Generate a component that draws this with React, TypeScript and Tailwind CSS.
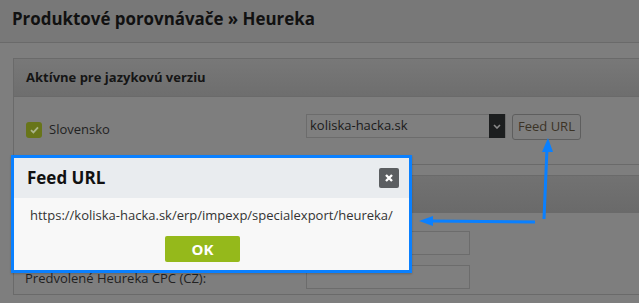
import React from 'react';

const font = { fontFamily: '"Open Sans", "Noto Sans", sans-serif' };

function Field({ label, top }: { label: string; top?: boolean }) {
  return (
    <div className={`flex items-center h-[34px] ${top ? 'mt-[13px]' : ''}`}>
      <div className="w-[292px] pl-[11px] pt-[3px] text-[13px] text-[#222]">{label}</div>
      <div className="h-[24px] w-[164px] border border-[#6c6c6c] bg-[#7f7f7f]" />
    </div>
  );
}

export default function App() {
  return (
    <div className="relative h-[303px] w-[639px] overflow-hidden bg-[#7e7e7e]" style={font}>
      <div className="h-[43px] border-b border-[#6a6a6a] bg-[#787878] pl-[12px] pt-[6px]">
        <h1 className="text-[16.9px] font-bold leading-[26px] text-[#111]">Produktové porovnávače » Heureka</h1>
      </div>

      <div className="pl-[13px] pt-[15px]">
        <div className="border border-r-0 border-[#6a6a6a]">
          <div className="flex h-[38px] items-center border-b border-[#6a6a6a] bg-gradient-to-b from-[#787878] to-[#6e6e6e] pl-[12px]">
            <span className="text-[13px] font-bold text-[#151515]">Aktívne pre jazykovú verziu</span>
          </div>
          <div className="flex h-[67px] items-start pt-[17px]">
            <div className="flex w-[292px] items-center pl-[12px] pt-[6px]">
              <span className="flex h-[16px] w-[16px] items-center justify-center rounded-[3px] bg-[#687519]">
                <svg width="9" height="8" viewBox="0 0 9 8">
                  <path d="M1 4.2 L3.4 6.4 L8 1.4" fill="none" stroke="#aab38a" strokeWidth="1.8" />
                </svg>
              </span>
              <span className="ml-[7px] text-[13px] text-[#222]">Slovensko</span>
            </div>
            <div className="flex h-[24px] w-[200px] items-center border border-[#6c6c6c] bg-[#7f7f7f]">
              <span className="flex-1 pl-[3px] text-[13px] text-[#1a1a1a]">koliska-hacka.sk</span>
              <span className="flex h-[24px] w-[16px] items-center justify-center bg-[#1c1e1f]">
                <svg width="8" height="5" viewBox="0 0 8 5">
                  <path d="M1 1 L4 4 L7 1" fill="none" stroke="#8a8a8a" strokeWidth="1.6" />
                </svg>
              </span>
            </div>
            <div className="ml-[6px] flex h-[26px] items-center rounded-[3px] border border-[#5e5e5e] px-[5px] text-[13px] text-[#3b3326]">
              Feed URL
            </div>
          </div>
        </div>

        <div className="mt-[10px] border border-r-0 border-[#6a6a6a]">
          <div className="h-[37px] border-b border-[#6a6a6a] bg-gradient-to-b from-[#727272] to-[#6a6a6a]" />
          <Field label="" top />
          <Field label="Predvolené Heureka CPC (CZ):" />
        </div>
      </div>

      <div className="absolute left-[11px] top-[155px] w-[401px] border-[3px] border-[#0a80ff] bg-[#f8f8f8] shadow-[0_1px_2px_rgba(0,0,0,0.2)]">
        <div className="flex h-[40px] items-center justify-between bg-[#e9ecef] pl-[13px] pr-[10px]">
          <span className="text-[17px] font-bold text-[#111]">Feed URL</span>
          <span className="flex h-[20px] w-[20px] items-center justify-center rounded-[2px] bg-[#5b5e61]">
            <svg width="10" height="10" viewBox="0 0 10 10">
              <path d="M2 2 L8 8 M8 2 L2 8" stroke="#fff" strokeWidth="2.4" />
            </svg>
          </span>
        </div>
        <div className="flex flex-col pb-[8px] pt-[6px]">
          <div className="w-full pl-[16px] text-[13px] leading-[22px] text-[#333]">
            https://koliska-hacka.sk/erp/impexp/specialexport/heureka/
          </div>
          <div className="ml-[151px] mt-[10px] flex h-[26px] w-[75px] items-center justify-center rounded-[2px] bg-[#95b91b] text-[15px] font-bold text-white">
            OK
          </div>
        </div>
      </div>

      <svg className="absolute left-0 top-0" width="639" height="303" viewBox="0 0 639 303">
        <path d="M544 219 L547 148" stroke="#0a80ff" strokeWidth="3" />
        <path d="M548 138 L542 152 L553 152 Z" fill="#0a80ff" />
        <path d="M535 222 L431 221" stroke="#0a80ff" strokeWidth="3" />
        <path d="M419 221 L433 216 L433 226 Z" fill="#0a80ff" />
      </svg>
    </div>
  );
}
